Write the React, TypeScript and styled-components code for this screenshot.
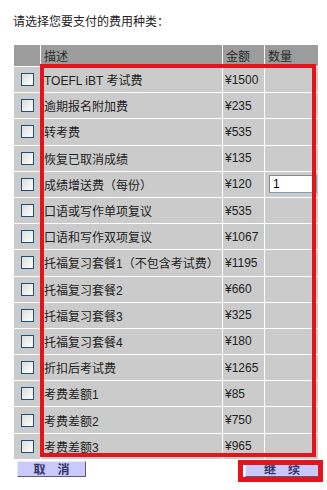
import React from "react";
import styled, { createGlobalStyle } from "styled-components";

const fees = [
  { title: "TOEFL iBT 考试费", price: "¥1500" },
  { title: "逾期报名附加费", price: "¥235" },
  { title: "转考费", price: "¥535" },
  { title: "恢复已取消成绩", price: "¥135" },
  { title: "成绩增送费（每份）", price: "¥120", qty: "1" },
  { title: "口语或写作单项复议", price: "¥535" },
  { title: "口语和写作双项复议", price: "¥1067" },
  { title: "托福复习套餐1（不包含考试费）", price: "¥1195" },
  { title: "托福复习套餐2", price: "¥660" },
  { title: "托福复习套餐3", price: "¥325" },
  { title: "托福复习套餐4", price: "¥180" },
  { title: "折扣后考试费", price: "¥1265" },
  { title: "考费差额1", price: "¥85" },
  { title: "考费差额2", price: "¥750" },
  { title: "考费差额3", price: "¥965" },
];

const App = () => {
  return (
    <Page>
      <GlobalStyle />
      <Title>请选择您要支付的费用种类：</Title>
      <TableWrap>
        <FeeTable>
          <HeadCell />
          <HeadCell>描述</HeadCell>
          <HeadCell>金额</HeadCell>
          <HeadCell>数量</HeadCell>
          {fees.map((fee) => (
            <React.Fragment key={fee.title}>
              <Cell $center>
                <CheckBox />
              </Cell>
              <Cell>{fee.title}</Cell>
              <Cell $price>{fee.price}</Cell>
              <Cell>{fee.qty && <QtyInput defaultValue={fee.qty} />}</Cell>
            </React.Fragment>
          ))}
        </FeeTable>
        <Highlight />
      </TableWrap>
      <ButtonRow>
        <CancelButton>取　消</CancelButton>
        <NextWrap>
          <NextButton>继　续</NextButton>
          <ButtonHighlight />
        </NextWrap>
      </ButtonRow>
    </Page>
  );
};

const GlobalStyle = createGlobalStyle`
  body {
    margin: 0;
    background: #ffffff;
    font-family: "Liberation Sans", "Noto Sans CJK SC", sans-serif;
  }
`;

const Page = styled.div`
  width: 327px;
  height: 490px;
  padding-left: 13px;
  box-sizing: border-box;
  color: #222222;
  font-size: 12px;
`;

const Title = styled.div`
  height: 45px;
  padding-top: 14px;
  box-sizing: border-box;
  line-height: 16px;
`;

const TableWrap = styled.div`
  position: relative;
  margin-left: 1px;
`;

const FeeTable = styled.div`
  display: grid;
  grid-template-columns: 26px 181px 41px 53px;
  grid-template-rows: 21px repeat(15, 25.2px);
  gap: 1px;
  width: 304px;
  background: #ffffff;
`;

const HeadCell = styled.div`
  display: flex;
  align-items: center;
  padding-left: 3px;
  background: #9c9c9c;
  color: #2a2a2a;
`;

const Cell = styled.div<{ $center?: boolean; $price?: boolean }>`
  display: flex;
  align-items: center;
  justify-content: ${(p) => (p.$center ? "center" : "flex-start")};
  padding-left: ${(p) => (p.$center ? "0" : p.$price ? "2px" : "3px")};
  background: #cbcbcb;
  white-space: nowrap;
  overflow: hidden;
  color: #222222;
`;

const CheckBox = styled.span`
  width: 11px;
  height: 11px;
  border: 1px solid #1c5180;
  background: linear-gradient(135deg, #dcdcd7 0%, #ffffff 100%);
`;

const QtyInput = styled.input`
  width: 48px;
  height: 18px;
  margin-left: 1px;
  padding: 0 0 0 3px;
  box-sizing: border-box;
  border: 1px solid #7f9db9;
  border-top-color: #8a8a8a;
  border-left-color: #8a8a8a;
  background: #ffffff;
  font-family: "Liberation Sans", sans-serif;
  font-size: 12px;
  color: #000000;
`;

const Highlight = styled.div`
  position: absolute;
  left: 26px;
  top: 19px;
  width: 276px;
  height: 393px;
  box-sizing: border-box;
  border: 4px solid #e3141c;
  pointer-events: none;
`;

const ButtonRow = styled.div`
  display: flex;
  justify-content: space-between;
  width: 306px;
  margin-top: 2px;
  padding-left: 4px;
  box-sizing: border-box;
`;

const FormButton = styled.button`
  height: 16px;
  padding: 0;
  border: 1px solid;
  border-color: #e8e8ff #5c5c7a #5c5c7a #e8e8ff;
  background: #c9c9fb;
  font-family: "Noto Sans CJK SC", sans-serif;
  font-size: 12px;
  font-weight: bold;
  line-height: 14px;
  color: #333366;
`;

const CancelButton = styled(FormButton)`
  width: 69px;
`;

const NextWrap = styled.div`
  position: relative;
`;

const NextButton = styled(FormButton)`
  width: 74px;
`;

const ButtonHighlight = styled.div`
  position: absolute;
  left: -7px;
  top: -1px;
  width: 85px;
  height: 22px;
  box-sizing: border-box;
  border: 5px solid #e3141c;
  border-left-width: 5px;
  pointer-events: none;
`;

export default App;
